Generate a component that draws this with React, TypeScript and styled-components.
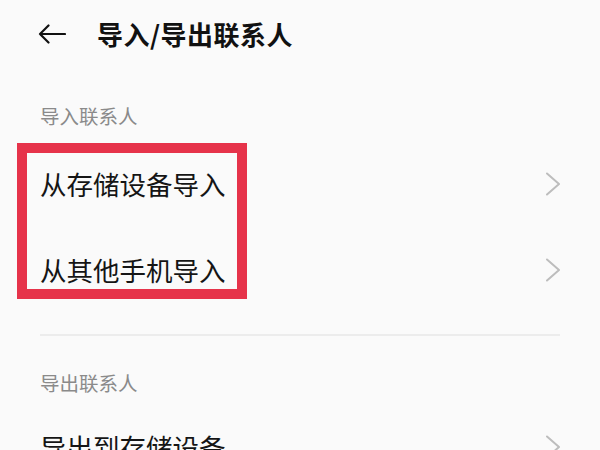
import React from "react";
import styled, { createGlobalStyle } from "styled-components";

const Global = createGlobalStyle`
  html, body { margin: 0; padding: 0; background: #fafafa; }
  body { font-family: "Noto Sans CJK SC", "Noto Sans", sans-serif; overflow: hidden; }
`;

const Page = styled.div`
  width: 600px;
  height: 450px;
  overflow: hidden;
  background: #fafafa;
`;

const Header = styled.header`
  height: 68px;
  display: flex;
  align-items: center;
  padding-left: 38px;
  gap: 31px;
`;

const Title = styled.h1`
  margin: 0;
  font-size: 26px;
  font-weight: 600;
  color: #111;
  letter-spacing: 0.5px;
  line-height: 1;
`;

const SectionLabel = styled.div<{ $top: number }>`
  margin-top: ${(p) => p.$top}px;
  padding-left: 40px;
  font-size: 19.5px;
  line-height: 20px;
  color: #8a8a8a;
`;

const List = styled.div<{ $top: number }>`
  position: relative;
  margin-top: ${(p) => p.$top}px;
`;

const Row = styled.div`
  height: 86px;
  display: flex;
  align-items: center;
  justify-content: space-between;
  padding: 0 40px;
`;

const RowText = styled.span`
  font-size: 26.5px;
  color: #151515;
  line-height: 1;
`;

const Divider = styled.div`
  margin: 21px 40px 0;
  height: 2px;
  background: #ececec;
`;

const Highlight = styled.div`
  position: absolute;
  left: 17px;
  top: 2px;
  width: 230px;
  height: 156px;
  box-sizing: border-box;
  border: 10px solid #e6334a;
  pointer-events: none;
`;

const BackArrow = () => (
  <svg width="28" height="20" viewBox="0 0 28 20" fill="none">
    <path d="M27 10H2M10.5 1.5L2 10l8.5 8.5" stroke="#111" strokeWidth="2.2" strokeLinecap="round" strokeLinejoin="round" />
  </svg>
);

const Chevron = () => (
  <svg width="14" height="24" viewBox="0 0 14 24" fill="none">
    <path d="M1 1.5L13 12L1 22.5" stroke="#bdbdbd" strokeWidth="2" strokeLinecap="round" strokeLinejoin="round" />
  </svg>
);

export default function App() {
  return (
    <Page>
      <Global />
      <Header>
        <BackArrow />
        <Title>导入/导出联系人</Title>
      </Header>
      <SectionLabel $top={38}>导入联系人</SectionLabel>
      <List $top={15}>
        <Row>
          <RowText>从存储设备导入</RowText>
          <Chevron />
        </Row>
        <Row>
          <RowText>从其他手机导入</RowText>
          <Chevron />
        </Row>
        <Highlight />
      </List>
      <Divider />
      <SectionLabel $top={37}>导出联系人</SectionLabel>
      <List $top={11}>
        <Row>
          <RowText>导出到存储设备</RowText>
          <Chevron />
        </Row>
      </List>
    </Page>
  );
}
